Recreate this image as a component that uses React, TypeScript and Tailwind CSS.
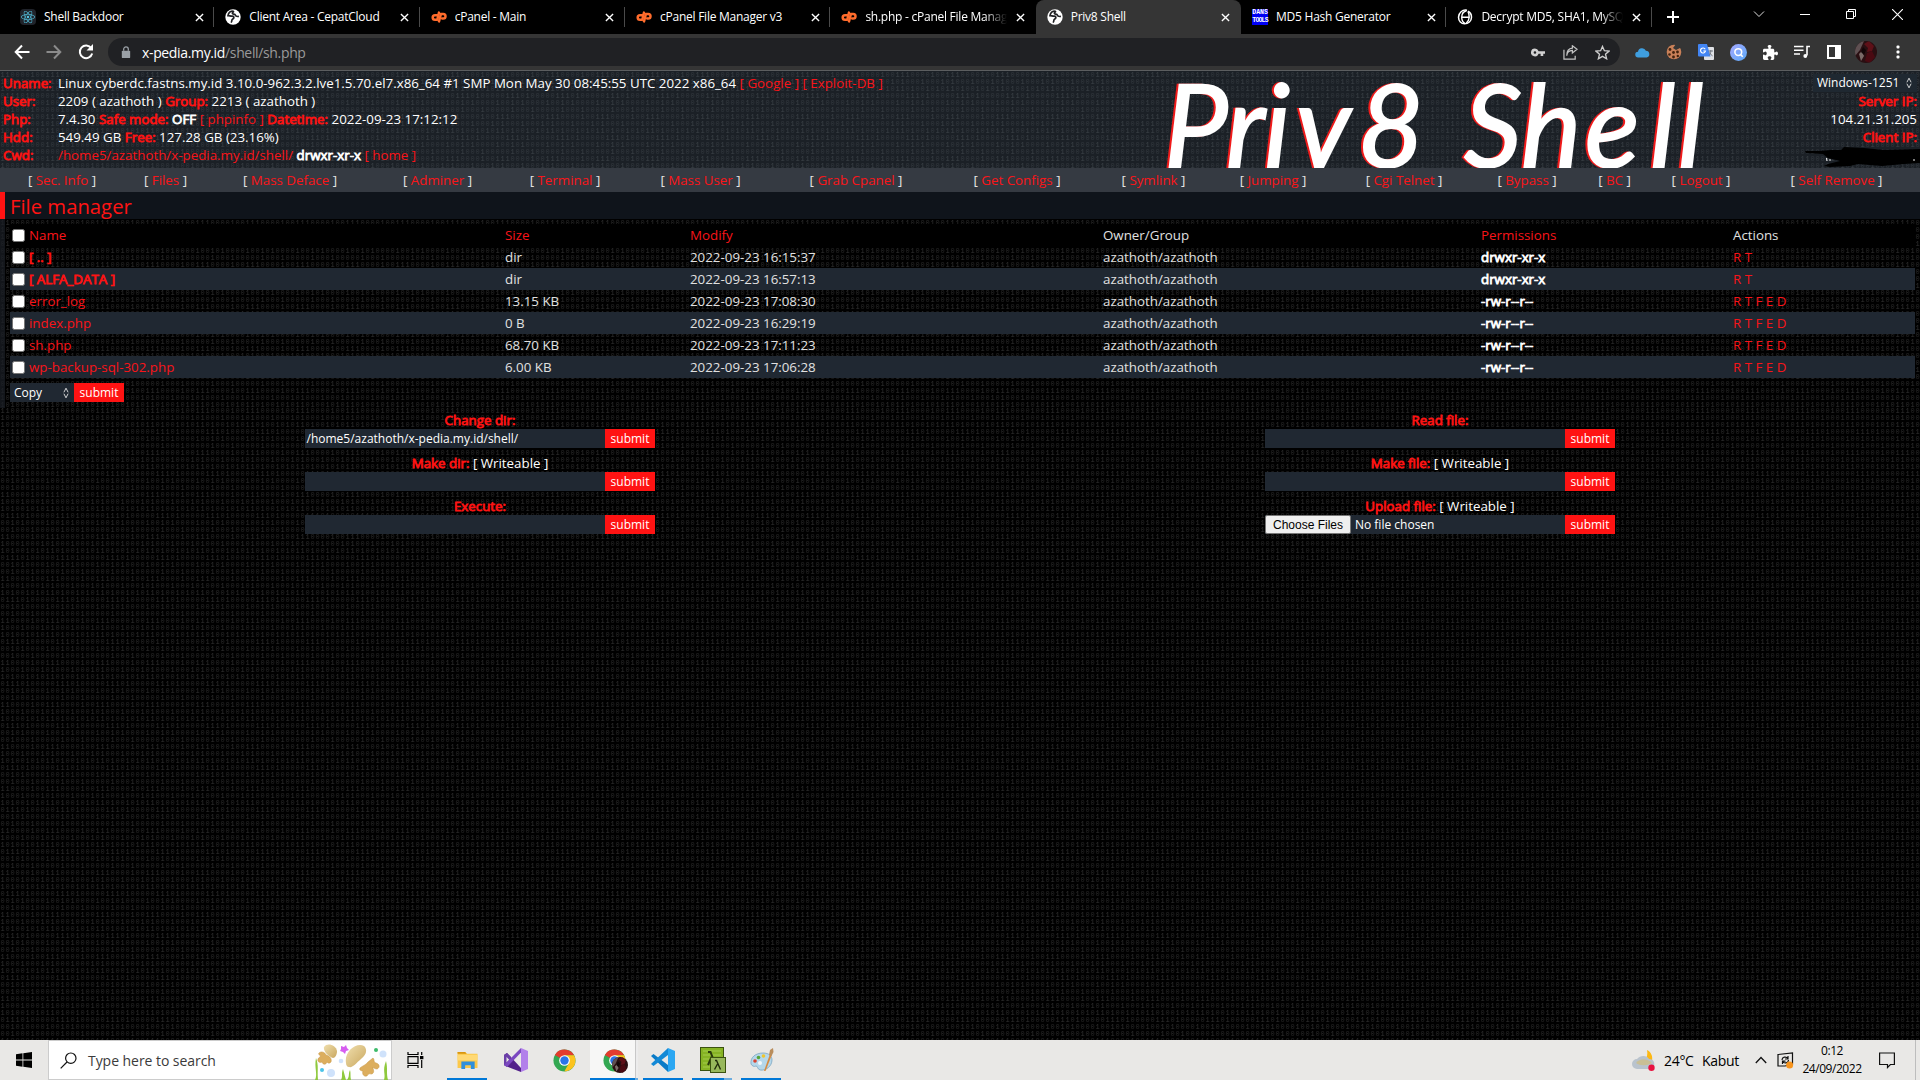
import React, { useId } from "react";
import { FaReact, FaPuzzlePiece } from "react-icons/fa6";

const DIGIT_ROWS = ["1100001001", "1000100010", "1010010101", "0111010000", "0010100001", "0010001000"];

/** Repeating binary texture that fills its positioned parent. */
function Binary({ zero, one }: { zero: string; one: string }) {
  const id = useId();
  return (
    <svg className="pointer-events-none absolute inset-0 h-full w-full" aria-hidden="true">
      <defs>
        <pattern id={id} width="50" height="42" patternUnits="userSpaceOnUse">
          {DIGIT_ROWS.map((row, r) =>
            row.split("").map((d, c) => (
              <text key={r + "-" + c} x={c * 5 + 0.4} y={r * 7 + 6} fontSize="7" fontFamily="Liberation Mono, monospace" fill={d === "1" ? one : zero}>
                {d}
              </text>
            ))
          )}
        </pattern>
      </defs>
      <rect width="100%" height="100%" fill={`url(#${id})`} />
    </svg>
  );
}

function Globe() {
  return (
    <svg viewBox="0 0 16 16" className="h-4 w-4 shrink-0">
      <circle cx="8" cy="8" r="7.700" fill="#fff" />
      <path d="M8.400 2C5 2 3.400 4 3 6.600c1.500 0 2.600.6 4.200.5 1.400 0 1.900 1.100 1.500 2.100-.5 1.100-1.900.8-1.800 2.100 0 .9-.4 1.700-.8 2.300M9 2.200c-.8.8-1.900 1.300-1.600 2.300.4 1 2.600.2 3 1.700.3 1.500 1.900 1.400 3.500 1.200" fill="none" stroke="#202124" strokeWidth="1.700" />
    </svg>
  );
}

function ReactFav() {
  return (
    <div className="flex h-4 w-4 shrink-0 items-center justify-center rounded-sm bg-[#20232a]">
      <FaReact className="h-3.5 w-3.5 text-[#53c1de]" />
    </div>
  );
}

function CpFav() {
  return (
    <svg viewBox="0 0 16 12" className="h-3 w-4 shrink-0" fill="none" stroke="#ff6c2c" strokeWidth="2.500" strokeLinecap="round" strokeLinejoin="round">
      <path d="M6 4.200H4a2.300 2.300 0 0 0 0 4.600h2.300L8 1.600" />
      <path d="M8 10.400 9.900 3h2.300a2.300 2.300 0 0 1 0 4.600h-1" />
    </svg>
  );
}

function DansFav() {
  return (
    <div className="flex h-4 w-4 shrink-0 flex-col items-center justify-center bg-[#0000f5] font-['Liberation_Mono',monospace] text-[6.500px] leading-[8px] font-bold text-white">
      <span>DANS</span>
      <span className="tracking-[-0.8px]">TOOLS</span>
    </div>
  );
}

function ThetaFav() {
  return (
    <svg viewBox="0 0 16 16" className="h-4 w-4 shrink-0" fill="none" stroke="#fff">
      <path d="M10 1.300C5.500.2 1.500 4 1.500 8.200c0 3.800 2.800 6.600 6 6.600 3.800 0 7-2.700 7-6.600 0-2.900-1.600-5-3.700-5.900" strokeWidth="1.500" />
      <path d="M9.500 1.800C6.500 2.500 4.800 5 4.700 8.200c0 3 1.200 5 3 6M11 2.800c1 1.600 1.300 3.400 1.200 5.400H4.700M12.200 8.200c-.2 2.600-1.200 4.600-3 6" strokeWidth="1.400" />
    </svg>
  );
}

function Cross({ className }: { className: string }) {
  return (
    <svg viewBox="0 0 10 10" className={className} stroke="currentColor" fill="none">
      <path d="M1 1l8 8M9 1l-8 8" strokeWidth="1.500" />
    </svg>
  );
}

const TABS = [
  { title: "Shell Backdoor", icon: <ReactFav /> },
  { title: "Client Area - CepatCloud", icon: <Globe /> },
  { title: "cPanel - Main", icon: <CpFav /> },
  { title: "cPanel File Manager v3", icon: <CpFav /> },
  { title: "sh.php - cPanel File Manager v3", icon: <CpFav />, fade: true, last: true },
  { title: "Priv8 Shell", icon: <Globe />, active: true, last: true },
  { title: "MD5 Hash Generator", icon: <DansFav /> },
  { title: "Decrypt MD5, SHA1, MySQL, NTLM", icon: <ThetaFav />, fade: true },
];

function TabStrip() {
  return (
    <div className="flex h-[34px] bg-black pl-[9px] font-['Open_Sans','Noto_Sans',sans-serif] text-[12px] text-white">
      {TABS.map((t) => (
        <div
          key={t.title}
          className={
            "relative flex h-[34px] w-[205.350px] shrink-0 items-center pl-[11px] pr-[10px] " + (t.active ? "rounded-t-lg bg-[#353535]" : "")
          }
        >
          {t.icon}
          <div
            className={
              "ml-2 w-[142px] overflow-hidden whitespace-nowrap tracking-[-0.25px] " +
              (t.fade ? "[mask-image:linear-gradient(to_right,#000_84%,transparent)]" : "")
            }
          >
            {t.title}
          </div>
          <Cross className="ml-[8.500px] h-[9px] w-[9px] shrink-0" />
          {!t.last && <div className="absolute right-0 top-[7px] h-5 w-px bg-[#4a4a4a]" />}
        </div>
      ))}
      <svg viewBox="0 0 14 14" className="ml-[14px] mt-[10px] h-[14px] w-[14px]" stroke="#fff" strokeWidth="2">
        <path d="M7 1v12M1 7h12" />
      </svg>
      <div className="ml-auto flex h-7 items-center">
        <svg viewBox="0 0 12 12" className="mr-[35px] h-3 w-3" fill="none" stroke="#ddd">
          <path d="M1 3.500l5 5 5-5" />
        </svg>
        <svg viewBox="0 0 10 10" className="mr-9 h-[10px] w-[10px]" stroke="#fff">
          <path d="M0 5.500h10" />
        </svg>
        <svg viewBox="0 0 10 10" className="mr-9 h-[10px] w-[10px]" stroke="#fff" fill="none">
          <path d="M.5 2.500h7v7h-7zM2.500 2.500v-2h7v7h-2" />
        </svg>
        <svg viewBox="0 0 10 10" className="mr-[17px] h-[11px] w-[11px]" stroke="#fff" fill="none">
          <path d="M0 0l10 10M10 0L0 10" />
        </svg>
      </div>
    </div>
  );
}

function Slot({ w, children }: { w: string; children: React.ReactNode }) {
  return <div className={"flex h-full items-center justify-center " + w}>{children}</div>;
}

function Toolbar() {
  return (
    <div className="flex h-[37px] items-center border-b border-[#5c5e60] bg-[#353535] pl-[6px] font-['Open_Sans','Noto_Sans',sans-serif]">
      <Slot w="w-8">
        <svg viewBox="0 0 16 16" className="h-4 w-4" fill="none" stroke="#fff" strokeWidth="2">
          <path d="M15.500 8H2M8 1.500L1.700 8 8 14.500" />
        </svg>
      </Slot>
      <Slot w="w-8">
        <svg viewBox="0 0 16 16" className="h-4 w-4" fill="none" stroke="#8b8b8b" strokeWidth="2">
          <path d="M.5 8H14M8 1.500L14.300 8 8 14.500" />
        </svg>
      </Slot>
      <Slot w="w-8">
        <svg viewBox="0 0 16 16" className="h-4 w-4" fill="none" stroke="#fff" strokeWidth="2">
          <path d="M13.300 4.200A6.300 6.300 0 1 0 14.200 9.500" />
          <path d="M15 0v6.500H8.500z" fill="#fff" stroke="none" />
        </svg>
      </Slot>
      <div className="ml-[6px] flex h-7 w-[1512px] items-center rounded-full bg-[#202124] pl-[13px]">
        <svg viewBox="0 0 10 14" className="h-[13px] w-[10px]">
          <rect x="0.500" y="5" width="9" height="8" rx="1" fill="#9aa0a6" />
          <path d="M2.500 5V3.500a2.500 2.500 0 0 1 5 0V5" fill="none" stroke="#9aa0a6" strokeWidth="1.400" />
        </svg>
        <div className="ml-[11px] text-[14px] tracking-[-0.350px] text-[#9a9a9a]">
          <span className="text-white">x-pedia.my.id</span>/shell/sh.php
        </div>
        <div className="ml-auto mr-[2px] flex h-full">
          <Slot w="w-8">
            <svg viewBox="0 0 16 10" className="h-[9px] w-[14px]" fill="#d0d0d0">
              <path fillRule="evenodd" d="M4.500.5a4.500 4.500 0 1 0 4.200 6H11V9h3V6.500h2v-3H8.700A4.500 4.500 0 0 0 4.500.5zm0 3a1.500 1.500 0 1 1 0 3 1.500 1.500 0 0 1 0-3z" />
            </svg>
          </Slot>
          <Slot w="w-8">
            <svg viewBox="0 0 16 16" className="h-[15px] w-[15px]" fill="none" stroke="#c4c4c4" strokeWidth="1.300">
              <path d="M1 5v10h12v-3.500M4 11.500c.3-4 2.500-5.500 6-5.700V8.600L15 4.500 10 .8v2.600C5.500 3.700 4 7 4 11.500z" />
            </svg>
          </Slot>
          <Slot w="w-8">
            <svg viewBox="0 0 16 16" className="h-[15px] w-[15px]" fill="none" stroke="#d0d0d0" strokeWidth="1.400">
              <path d="M8 1.500l2 4.600 5 .4-3.800 3.300 1.200 4.900L8 12.100l-4.400 2.600 1.200-4.900L1 6.500l5-.4z" />
            </svg>
          </Slot>
        </div>
      </div>
      <div className="ml-[6px] flex h-full">
        <Slot w="w-8">
          <svg viewBox="0 0 16 12" className="h-[11px] w-[15px]" fill="#3f9fe0">
            <path d="M3.500 11.500a3.200 3.200 0 0 1-.4-6.400A4.500 4.500 0 0 1 11.700 4 3.800 3.800 0 0 1 12.500 11.500z" />
          </svg>
        </Slot>
        <Slot w="w-8">
          <svg viewBox="0 0 16 16" className="h-4 w-4">
            <circle cx="8" cy="8" r="7.300" fill="#c98058" />
            <path d="M10 0L7 4l3 2 6-3V0z" fill="#353535" />
            <g fill="#43230f">
              <circle cx="4" cy="5.500" r="1.400" />
              <circle cx="7.500" cy="8.500" r="1.400" />
              <circle cx="3.500" cy="10.500" r="1.300" />
              <circle cx="11.500" cy="8" r="1.400" />
              <circle cx="7.500" cy="13" r="1.400" />
              <circle cx="11.800" cy="12" r="1.200" />
            </g>
          </svg>
        </Slot>
        <Slot w="w-8">
          <svg viewBox="0 0 16 16" className="h-4 w-4">
            <rect x="6" y="3" width="10" height="13" rx="1" fill="#dfe1e5" />
            <path d="M0 1a1 1 0 0 1 1-1h8l3.500 12.500H1a1 1 0 0 1-1-1z" fill="#4285f4" />
            <path d="M7.200 5.200A2.500 2.500 0 1 0 7.500 7H5.300" fill="none" stroke="#fff" strokeWidth="1.200" />
            <path d="M10.500 7H15M12.800 6v1c0 2-.8 3.500-1.600 4.300M11.600 8.500c.6 1.500 1.600 2.600 3 3.400" fill="none" stroke="#6f7680" />
          </svg>
        </Slot>
        <Slot w="w-8">
          <svg viewBox="0 0 16 16" className="h-[17px] w-[17px]">
            <defs>
              <linearGradient id="qGrad" x1="0" y1="0" x2="1" y2="1">
                <stop offset="0" stopColor="#a6a8ff" />
                <stop offset="1" stopColor="#5aa9f8" />
              </linearGradient>
            </defs>
            <circle cx="8" cy="8" r="8" fill="url(#qGrad)" />
            <circle cx="7.800" cy="7.600" r="3.200" fill="none" stroke="#fff" strokeWidth="1.500" />
            <path d="M10 10l2 2" stroke="#fff" strokeWidth="1.500" />
          </svg>
        </Slot>
        <Slot w="w-8">
          <FaPuzzlePiece className="h-[15px] w-[15px] text-white" />
        </Slot>
        <Slot w="w-[31px]">
          <svg viewBox="0 0 16 14" className="h-[14px] w-4" fill="none" stroke="#fff" strokeWidth="1.600">
            <path d="M0 1.500h9.500M0 5.200h9.500M0 9h6M13 10.500V1.500h3" />
            <circle cx="11.300" cy="11" r="1.900" fill="#fff" stroke="none" />
          </svg>
        </Slot>
        <Slot w="w-[33px]">
          <svg viewBox="0 0 14 14" className="h-[14px] w-[14px]">
            <rect x="1" y="1" width="12" height="12" fill="none" stroke="#fff" strokeWidth="2" />
            <rect x="8" y="1" width="5" height="12" fill="#fff" />
          </svg>
        </Slot>
        <Slot w="w-[32px]">
          <Avatar className="h-[22px] w-[22px]" />
        </Slot>
        <Slot w="w-[32px]">
          <svg viewBox="0 0 4 14" className="h-[14px] w-1" fill="#fff">
            <rect x="0.500" y="0.500" width="3" height="3" rx="1" />
            <rect x="0.500" y="5.500" width="3" height="3" rx="1" />
            <rect x="0.500" y="10.500" width="3" height="3" rx="1" />
          </svg>
        </Slot>
      </div>
    </div>
  );
}

function Avatar({ className }: { className: string }) {
  const clip = useId();
  return (
    <svg viewBox="0 0 22 22" className={className}>
      <clipPath id={clip}>
        <circle cx="11" cy="11" r="11" />
      </clipPath>
      <g clipPath={`url(#${clip})`}>
        <rect width="22" height="22" fill="#2a0f12" />
        <path d="M0 0h9L5 9l-5 6z" fill="#5f5052" />
        <path d="M9 3l5-3 5 5-2 5-5 1 1-4z" fill="#5e1018" />
        <path d="M4 13l3-3 2 5-3 5z" fill="#7a6a68" />
        <path d="M12 12l5-2 3 6-5 6-5-2z" fill="#4a0a12" />
        <path d="M8 6l3 3-2 5-3-3z" fill="#120608" />
      </g>
    </svg>
  );
}

function Tag({ children }: { children: React.ReactNode }) {
  return <span className="text-[#ff1313] [-webkit-text-stroke:0.800px_#ff1313]">{children}</span>;
}

function Strong({ children }: { children: React.ReactNode }) {
  return <span className="text-white [-webkit-text-stroke:0.800px_#fff]">{children}</span>;
}

function Red({ children }: { children: React.ReactNode }) {
  return <span className="text-[#f91419]">{children}</span>;
}

function Updown() {
  return (
    <svg viewBox="0 0 6 12" className="h-3 w-[6px]" fill="none" stroke="#e5e5e5">
      <path d="M.9 5.300L3 1.200l2.100 4.100M.9 6.700L3 10.800l2.100-4.100" strokeWidth="0.900" />
    </svg>
  );
}

const LOGO: [string, number][] = [
  ["P", 1164],
  ["r", 1226],
  ["i", 1264],
  ["v", 1296],
  ["8", 1358],
  ["S", 1464],
  ["h", 1521],
  ["e", 1585],
  ["l", 1650],
  ["l", 1678],
];

function Header() {
  const rows: [string, React.ReactNode][] = [
    [
      "Uname:",
      <>
        Linux cyberdc.fastns.my.id 3.10.0-962.3.2.lve1.5.70.el7.x86_64 #1 SMP Mon May 30 08:45:55 UTC 2022 x86_64 <Red>[ Google ]</Red>{" "}
        <Red>[ Exploit-DB ]</Red>
      </>,
    ],
    [
      "User:",
      <>
        2209 ( azathoth ) <Tag>Group:</Tag> 2213 ( azathoth )
      </>,
    ],
    [
      "Php:",
      <>
        7.4.30 <Tag>Safe mode:</Tag> <Strong>OFF</Strong> <Red>[ phpinfo ]</Red> <Tag>Datetime:</Tag> 2022-09-23 17:12:12
      </>,
    ],
    [
      "Hdd:",
      <>
        549.49 GB <Tag>Free:</Tag> 127.28 GB (23.16%)
      </>,
    ],
    [
      "Cwd:",
      <>
        <Red>/home5/azathoth/x-pedia.my.id/shell/</Red> <Strong>drwxr-xr-x</Strong> <Red>[ home ]</Red>
      </>,
    ],
  ];
  return (
    <div className="relative flex h-[97px] justify-between overflow-hidden bg-[#1b2026]">
      <Binary zero="#30363c" one="#3b4147" />
      <div className="relative pl-[3px] pt-[3px]">
        {rows.map(([k, v]) => (
          <div key={k} className="flex h-[18px] items-center whitespace-nowrap leading-[18px]">
            <div className="w-[55px]">
              <Tag>{k}</Tag>
            </div>
            <div>{v}</div>
          </div>
        ))}
      </div>
      <svg viewBox="1150 71 580 97" className="absolute left-[1150px] top-0 h-[97px] w-[580px]">
        <g
          className="drop-shadow-[-1.500px_0_0_#f01a1a]"
          fontFamily="Lato, sans-serif"
          fontStyle="italic"
          fontSize="114"
          fill="#fff"
          stroke="#fff"
          strokeWidth="1.800"
        >
          {LOGO.map(([c, x]) => (
            <text key={x} x={x} y="167" >
              {c}
            </text>
          ))}
        </g>
      </svg>
      <div className="relative pr-[3px] text-right">
        <div className="ml-auto mt-[3px] flex h-[18px] w-[104px] items-center justify-between bg-[#1f2831] pl-[4px] pr-[5px] text-[12px]">
          <span>Windows-1251</span>
          <Updown />
        </div>
        <div className="h-[18px]">
          <Tag>Server IP:</Tag>
        </div>
        <div className="h-[18px]">104.21.31.205</div>
        <div className="h-[18px]">
          <Tag>Client IP:</Tag>
        </div>
      </div>
      <svg viewBox="1804 146 116 22" className="absolute right-0 top-[75px] h-[22px] w-[116px]">
        <path d="M1805 151l14 0 12-1 10 0 3-3 20 1 20 2 36-1v14l-16 1-22 2-24-2-8 2-20 1-6-1 4-2 12-3-12-3-5-4-17-1z" fill="#000" />
        <path d="M1826.500 158l.5 3M1829 160h2M1913 160h2" stroke="#eee" strokeWidth="1.200" />
      </svg>
    </div>
  );
}

const NAV: [string, string][] = [
  ["Sec. Info", "w-[124px]"],
  ["Files", "w-[83px]"],
  ["Mass Deface", "w-[166px]"],
  ["Adminer", "w-[129px]"],
  ["Terminal", "w-[126px]"],
  ["Mass User", "w-[145px]"],
  ["Grab Cpanel", "w-[166px]"],
  ["Get Configs", "w-[156px]"],
  ["Symlink", "w-[117px]"],
  ["Jumping", "w-[122px]"],
  ["Cgi Telnet", "w-[140px]"],
  ["Bypass", "w-[106px]"],
  ["BC", "w-[69px]"],
  ["Logout", "w-[104px]"],
  ["Self Remove", "w-[167px]"],
];

function Nav() {
  return (
    <div className="flex h-6 items-center bg-[#353a42]">
      {NAV.map(([n, w]) => (
        <div key={n} className={"whitespace-nowrap text-center text-[#e4e4e4] " + w}>
          [ <span className="text-[#fb1519]">{n}</span> ]
        </div>
      ))}
    </div>
  );
}

const FILES = [
  { name: "[ .. ]", dir: true, size: "dir", mod: "2022-09-23 16:15:37" },
  { name: "[ ALFA_DATA ]", dir: true, size: "dir", mod: "2022-09-23 16:57:13" },
  { name: "error_log", size: "13.15 KB", mod: "2022-09-23 17:08:30" },
  { name: "index.php", size: "0 B", mod: "2022-09-23 16:29:19" },
  { name: "sh.php", size: "68.70 KB", mod: "2022-09-23 17:11:23" },
  { name: "wp-backup-sql-302.php", size: "6.00 KB", mod: "2022-09-23 17:06:28" },
];

const ROW = "grid h-[22px] grid-cols-[495px_185px_413px_378px_252px_1fr] items-center ";

function Check() {
  return <div className="ml-[2px] mr-[4px] h-[13px] w-[13px] shrink-0 rounded-[2.500px] border border-[#767676] bg-white" />;
}

function Submit() {
  return <div className="flex h-[19px] w-[50px] items-center justify-center bg-[#ff1313] text-[12px] leading-[18px] text-white">submit</div>;
}

function FileManager() {
  return (
    <div>
      <div className="flex h-[27px] items-center border-l-[5px] border-[#ff1313] bg-[#0f141b] pl-[5px] text-[20.300px] text-[#ff1313]">
        File manager
      </div>
      <div className="relative h-[189px] bg-black text-[#e1e1e1]">
        <Binary zero="#262626" one="#313131" />
        <div className="relative h-full border-l-[5px] border-[#1b2026]/70 pl-[5px] pr-[5px] pt-[5px]">
          <div className={ROW + "bg-black"}>
            <div className="flex items-center">
              <Check />
              <Red>Name</Red>
            </div>
            <Red>Size</Red>
            <Red>Modify</Red>
            <span>Owner/Group</span>
            <Red>Permissions</Red>
            <span>Actions</span>
          </div>
          {FILES.map((f, i) => (
            <div key={f.name} className={ROW + (i % 2 ? "bg-[#202832]" : "")}>
              <div className="flex items-center">
                <Check />
                {f.dir ? <Tag>{f.name}</Tag> : <Red>{f.name}</Red>}
              </div>
              <span>{f.size}</span>
              <span>{f.mod}</span>
              <span>azathoth/azathoth</span>
              <Strong>{f.dir ? "drwxr-xr-x" : "-rw-r--r--"}</Strong>
              <Red>{f.dir ? "R T" : "R T F E D"}</Red>
            </div>
          ))}
          <div className="mt-[5px] flex text-white">
            <div className="flex h-[19px] w-16 items-center justify-between bg-[#202832] pl-1 pr-[5px] text-[12px]">
              <span>Copy</span>
              <Updown />
            </div>
            <Submit />
          </div>
        </div>
      </div>
    </div>
  );
}

function Field({ label, writable, value, file }: { label: string; writable?: boolean; value?: string; file?: boolean }) {
  return (
    <div className="flex h-[43px] w-[350px] flex-col">
      <div className="h-[18px] text-center leading-[18px]">
        <Tag>{label}</Tag>
        {writable && " [ Writeable ]"}
      </div>
      <div className="flex">
        <div className="flex h-[19px] w-[300px] items-center bg-[#202832] text-[12px]">
          {file && (
            <div className="mr-[2.500px] flex h-[19px] w-[86px] items-center justify-center whitespace-nowrap rounded-[2px] border border-[#767676] bg-[#efefef] font-['Liberation_Sans',sans-serif] text-[12px] text-black">
              Choose Files
            </div>
          )}
          <span className="pl-[1.500px]">{file ? "No file chosen" : value}</span>
        </div>
        <Submit />
      </div>
    </div>
  );
}

function Forms() {
  return (
    <div className="grid grid-cols-2 justify-items-center pt-[3px] text-white">
      <Field label="Change dir:" value="/home5/azathoth/x-pedia.my.id/shell/" />
      <Field label="Read file:" />
      <Field label="Make dir:" writable />
      <Field label="Make file:" writable />
      <Field label="Execute:" />
      <Field label="Upload file:" writable file />
    </div>
  );
}

function Chrome() {
  return (
    <svg viewBox="0 0 24 24" className="h-[23px] w-[23px]">
      <circle cx="12" cy="12" r="11.500" fill="#33a852" />
      <path d="M12 12L2 6.200A11.500 11.500 0 0 1 22 6.500H12z" fill="#e33b2e" />
      <path d="M12 6.500h10A11.500 11.500 0 0 1 11.800 23.500L17 14z" fill="#fcc31e" />
      <circle cx="12" cy="12" r="5.600" fill="#fff" />
      <circle cx="12" cy="12" r="4.400" fill="#2a74e8" />
    </svg>
  );
}

/** Seasonal search-box artwork: two mushrooms, bubbles and seaweed. */
function Mushroom({ className }: { className: string }) {
  return (
    <svg viewBox="0 0 76 37" className={className}>
      <defs>
        <linearGradient id="cap" x1="0" y1="0" x2="1" y2="1">
          <stop offset="0" stopColor="#f0dfae" />
          <stop offset="1" stopColor="#c9a75e" />
        </linearGradient>
      </defs>
      <g fill="#dcae5e" stroke="#c4923f" strokeWidth="0.500">
        <path d="M5 10c2-2 6-1 7 2 4 1 6 4 5 7-2 2-3 1-4 0-1 3-4 3-5 0-2 1-5 0-4-3 1-2 2-2 3-3-2-1-3-2-2-3z" />
        <path d="M46 25c2-2 6-3 8-6l5-4c2 2 0 4 3 5 4 1 4 5 1 6-2 0-3-1-4-2 0 3 2 5-1 7-3 0-3-1-5 2-4 1-5-3-4-5-2 0-4-1-3-3z" />
      </g>
      <path d="M10 4C13-1 22 2 23 8c0 4-2 7-4 7-4-1-10-6-9-11z" fill="url(#cap)" />
      <path d="M32 20C30 9 42-1 50 3c4 4 2 9-3 13s-8 9-12 8c-2 0-3-2-3-4z" fill="url(#cap)" />
      <path d="M27 3l3 1 2-2 1 3 2 2-3 1-1 3-2-2-3-1 1-2z" fill="#d65df0" />
      <circle cx="62" cy="7" r="2" fill="#3dbb6a" />
      <circle cx="8" cy="27" r="2" fill="#4bc3e8" />
      <g fill="#cfe2fb">
        <circle cx="27" cy="18" r="2.300" />
        <circle cx="17" cy="30" r="4" />
        <circle cx="69" cy="11" r="3.500" />
      </g>
      <path d="M1 37c3-6-1-12 1-22 3 8 1 12 2 22zM27 37c2-4 0-6 2-11l3 11zM33 37c3-4 1-6 3-10 1 3 0 6 1 10zM70 37c2-6-2-9 2-19 2 8 0 12 2 19z" fill="#8fc93d" />
    </svg>
  );
}

function TaskButton({ w, active, bar, children }: { w: string; active?: boolean; bar?: string; children: React.ReactNode }) {
  return (
    <div className={"relative flex h-10 shrink-0 items-center justify-center " + w + (active ? " bg-[#f7f7f6]" : "")}>
      {children}
      {bar && <div className={"absolute bottom-0 h-[2px] bg-[#0078d7] " + bar} />}
    </div>
  );
}

function Taskbar() {
  return (
    <div className="flex h-10 shrink-0 items-center bg-[#e9e8e6] font-['Open_Sans','Noto_Sans',sans-serif] text-black">
      <div className="flex w-12 justify-center">
        <svg viewBox="0 0 16 16" className="h-4 w-4" fill="#000">
          <path d="M0 2.300L6.500 1.300V7.600H0zM7.300 1.200L16 0V7.600H7.300zM0 8.400H6.500V14.700L0 13.700zM7.300 8.400H16V16L7.300 14.800z" />
        </svg>
      </div>
      <div className="relative flex h-10 w-[344px] items-center border border-[#cccccc] bg-white pl-[11px]">
        <svg viewBox="0 0 17 17" className="h-[17px] w-[17px]" fill="none" stroke="#111" strokeWidth="1.200">
          <circle cx="10.800" cy="6.200" r="5.200" />
          <path d="M7 10L.7 16.300" />
        </svg>
        <span className="ml-[11px] whitespace-nowrap text-[14px] tracking-[-0.05px] text-[#3b3b3b]">Type here to search</span>
        <Mushroom className="absolute bottom-[-1px] right-[1px] h-[37px] w-[76px]" />
      </div>
      <TaskButton w="w-[47px]">
        <svg viewBox="0 0 17 16" className="h-4 w-[17px]" fill="none" stroke="#000" strokeWidth="1.200">
          <path d="M1 0v2.500h10V0M1 16v-2.500h10V16M1 4.700h10v6.600H1zM14.700 0v3M14.700 8v8" />
          <rect x="13" y="4" width="3.400" height="3.200" fill="#000" stroke="none" />
        </svg>
      </TaskButton>
      <TaskButton w="w-[56px]" bar="left-2 w-10">
        <svg viewBox="0 0 22 20" className="ml-[2px] h-[19px] w-[22px]">
          <path d="M0 1h8l2 2h11v15H0z" fill="#fcc84a" />
          <path d="M0 1h8l1.500 2H0z" fill="#d9960f" />
          <path d="M0 4h21v6H0z" fill="#ffd975" />
          <path d="M4 19v-8h14v8h-4v-4H8v4z" fill="#2f8fdc" />
        </svg>
      </TaskButton>
      <TaskButton w="w-[42px]">
        <svg viewBox="0 0 24 24" className="h-6 w-6">
          <path d="M0 7l3-2 14 15v4L3 18.500 0 17z" fill="#52218a" />
          <path d="M3 5l4 4L3 19l-3-2V7z" fill="#6b3fa8" />
          <path d="M2.500 9v5.500l2.700-2.700z" fill="#e9e8e6" />
          <path d="M0 17l3 2L17 4.500V0z" fill="#7b48c0" />
          <path d="M17 0l7 3v18l-7 3z" fill="#b280ea" />
        </svg>
      </TaskButton>
      <TaskButton w="w-[53px] pl-[2px]">
        <Chrome />
      </TaskButton>
      <TaskButton w="w-[48px]" active bar="left-0 w-[45px]">
        <Chrome />
        <Avatar className="absolute left-[22px] top-[17px] h-4 w-4" />
        <div className="absolute right-0 top-0 h-[38px] w-[3px] border-l border-[#c8c8c8] bg-[#ececec]" />
        <div className="absolute bottom-0 right-0 h-[2px] w-[3px] bg-[#6cacdf]" />
      </TaskButton>
      <TaskButton w="w-[50px]" bar="left-[5px] w-10">
        <svg viewBox="0 0 24 24" className="h-6 w-6">
          <path d="M0 8l2.500-2L17 17v7z" fill="#0a7bc7" />
          <path d="M0 16l2.500 2L17 7V0z" fill="#1389d6" />
          <path d="M17 0l7 3v18l-7 3z" fill="#2ba7f2" />
        </svg>
      </TaskButton>
      <TaskButton w="w-[48px] pl-[2px]" bar="left-1 w-8">
        <svg viewBox="0 0 26 26" className="h-[26px] w-[26px]">
          <rect x="0.500" y="0.500" width="23" height="23" fill="#86b324" stroke="#3b5210" />
          <path d="M3 4h18M3 8h18M3 12h18M3 16h8M3 20h8" stroke="#a4cc4c" />
          <path d="M8 5h2.500l5 13M11.500 10l-3.500 8" fill="none" stroke="#2a3a0c" strokeWidth="2" />
          <rect x="10.500" y="10.500" width="15" height="15" fill="#98b85c" stroke="#3b5210" />
          <path d="M15 13.500h1.500l4 9M17.500 17l-3 5.500" fill="none" stroke="#222d0c" strokeWidth="1.400" />
        </svg>
        <div className="absolute bottom-0 left-9 h-[2px] w-2 bg-[#6cacdf]" />
      </TaskButton>
      <TaskButton w="w-[48px] pl-[3px]" bar="left-[5px] w-10">
        <svg viewBox="0 0 24 24" className="h-6 w-6">
          <path d="M1 16C0 9 6 5 13 5c6 0 9 3 9 7 0 6-6 11-12 10-3-1-2-4-4-4-2 1-4 0-5-2z" fill="#b5d7ea" stroke="#7ba6c2" strokeWidth="0.800" />
          <circle cx="5" cy="13" r="1.800" fill="#d8412f" />
          <circle cx="8.500" cy="9.500" r="1.800" fill="#57a639" />
          <circle cx="13.500" cy="8" r="1.800" fill="#f0c52e" />
          <circle cx="10" cy="15" r="2" fill="#f4f8fb" />
          <path d="M14 23L20 6l2 .6L15.500 23z" fill="#d58a3f" />
          <path d="M19 7l1-5 3-2 .5 4-2 4z" fill="#b98d5c" />
        </svg>
      </TaskButton>
      <div className="ml-auto flex h-10 items-center">
        <svg viewBox="0 0 24 21" className="h-[21px] w-6">
          <path d="M15 0c4 2 6 6 5 11h-8c3-3 4-7 3-11z" fill="#fdb813" />
          <path d="M5 19a5 5 0 0 1 0-10C8 5 15 5 17 9c5 0 6 4 5 7s-3 3-5 3z" fill="#b9c3cd" />
          <path d="M4 13c4-5 11-5 16 0-5 3-12 3-16 0z" fill="#c9bf95" />
          <circle cx="19.500" cy="17.700" r="3.200" fill="#e81240" />
        </svg>
        <span className="ml-[8px] w-[38px] whitespace-nowrap text-[14px] tracking-[-0.3px]">24°C</span>
        <span className="w-[53px] whitespace-nowrap text-[14px] tracking-[-0.3px]">Kabut</span>
        <svg viewBox="0 0 12 8" className="h-2 w-3" fill="none" stroke="#111" strokeWidth="1.300">
          <path d="M.8 7L6 1.500 11.200 7" />
        </svg>
        <svg viewBox="0 0 17 17" className="ml-[10px] h-[17px] w-[17px]" fill="none" stroke="#111" strokeWidth="1.200">
          <path d="M1 2.500L15.500 1v11L8 14 1 14z" />
          <path d="M5 8c0-3 4-4 6-1.500M11 4v3H8M11.500 8c0 3-4 4-6 1.500M5.500 12V9.200h3" />
          <circle cx="12.600" cy="13" r="3.500" fill="#f7941d" stroke="none" />
        </svg>
        <div className="ml-2 w-[60px] text-center text-[12px] leading-[18px] tracking-[-0.45px]">
          <div>0:12</div>
          <div>24/09/2022</div>
        </div>
        <svg viewBox="0 0 16 17" className="ml-[17px] h-[17px] w-4" fill="none" stroke="#111" strokeWidth="1.200">
          <path d="M.6 1h14.800v11.500h-4L8.500 15.500V12.500H.6z" />
        </svg>
        <div className="ml-5 mr-1 h-10 w-px bg-[#bdbdbd]" />
      </div>
    </div>
  );
}

export default function App() {
  return (
    <div className="flex h-[1080px] w-[1920px] flex-col overflow-hidden bg-black">
      <TabStrip />
      <Toolbar />
      <div className="relative flex-1 overflow-hidden font-['Open_Sans','Noto_Sans',sans-serif] text-[13.333px] leading-[18px] text-white">
        <Binary zero="#262626" one="#313131" />
        <div className="relative">
          <Header />
          <Nav />
          <FileManager />
          <Forms />
        </div>
      </div>
      <Taskbar />
    </div>
  );
}
